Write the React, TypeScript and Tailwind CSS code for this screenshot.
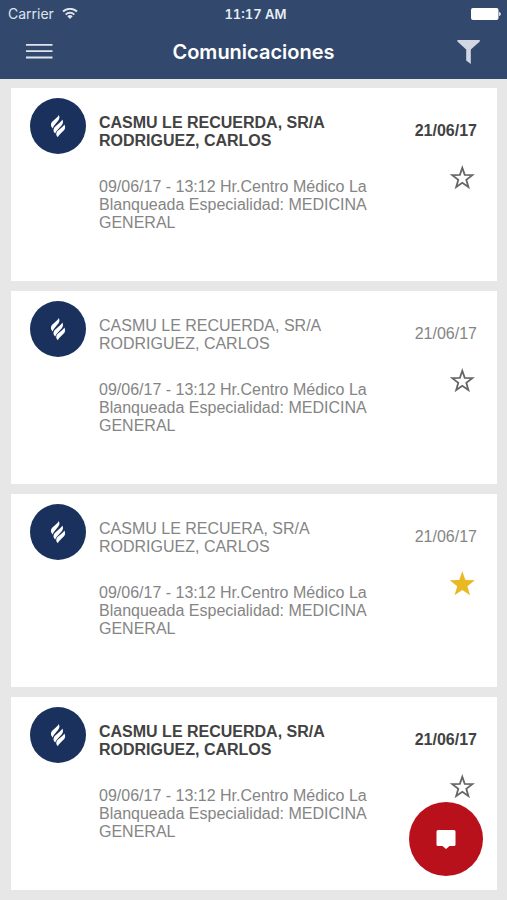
import React from 'react';

interface Comunicacion {
  id: number;
  titulo: string;
  detalle: string;
  fecha: string;
  leida: boolean;
  favorita: boolean;
}

const DETALLE = '09/06/17 - 13:12 Hr.Centro Médico La Blanqueada Especialidad: MEDICINA GENERAL';

const comunicaciones: Comunicacion[] = [
  { id: 1, titulo: 'CASMU LE RECUERDA, SR/A RODRIGUEZ, CARLOS', detalle: DETALLE, fecha: '21/06/17', leida: false, favorita: false },
  { id: 2, titulo: 'CASMU LE RECUERDA, SR/A RODRIGUEZ, CARLOS', detalle: DETALLE, fecha: '21/06/17', leida: true, favorita: false },
  { id: 3, titulo: 'CASMU LE RECUERA, SR/A RODRIGUEZ, CARLOS', detalle: DETALLE, fecha: '21/06/17', leida: true, favorita: true },
  { id: 4, titulo: 'CASMU LE RECUERDA, SR/A RODRIGUEZ, CARLOS', detalle: DETALLE, fecha: '21/06/17', leida: false, favorita: false },
];

const WifiIcon: React.FC = () => (
  <svg className="w-4 h-3" viewBox="0 0 16 12" fill="none" stroke="currentColor" strokeWidth="2">
    <path d="M1 3.600a10.200 10.200 0 0 1 14 0" />
    <path d="M3.700 6.600a6.200 6.200 0 0 1 8.600 0" />
    <path d="M8 11 5.300 8.300a3.800 3.800 0 0 1 5.400 0z" fill="currentColor" stroke="none" />
  </svg>
);

const BatteryIcon: React.FC = () => (
  <svg className="w-8 h-3" viewBox="0 0 32 12" fill="currentColor">
    <rect x="0" y="0" width="27.500" height="12" rx="2" />
    <path d="M28.200 4c2 .4 2 3.600 0 4z" />
  </svg>
);

const MenuIcon: React.FC = () => (
  <svg className="w-7 h-4" viewBox="0 0 28 16" stroke="currentColor" strokeWidth="1.8">
    <path d="M0 .9h26.500M0 7.200h26.500M0 13.500h26.500" />
  </svg>
);

const FilterIcon: React.FC = () => (
  <svg className="w-6 h-6" viewBox="0 0 24 24" fill="currentColor">
    <path d="M.4 0h22.400v1.600L13.800 9.400V24L9.200 20.500V9.400L.4 1.600z" />
  </svg>
);

const LogoIcon: React.FC = () => (
  <svg className="w-4 h-6" viewBox="0 0 16 24" fill="currentColor">
    <path d="M8.800 1C9.800 2.900 9.600 4.600 8.500 6.200L4.100 11.800C3.400 12.700 3 13.500 2.800 14.600 .7 12.900 .3 10.300 1.900 8.100L6.900 3.400C7.900 2.500 8.500 1.900 8.800 1z" />
    <path d="M12.300 5.600C13.400 7.500 13.200 9.300 12 11L7 16.500C6.100 17.500 5.500 18.300 5.300 19.500 3.200 17.800 2.900 15.400 4.500 13.200L10.100 8.200C11.200 7.200 12 6.600 12.300 5.600z" />
    <path d="M14.300 10.600C15.500 12.600 15.400 14.400 14.200 16.100L9.700 20.400C8.800 21.300 8.200 22 8 23.200 5.900 21.600 5.700 19.300 7.200 17.200L12.300 12.900C13.400 12 14 11.500 14.300 10.600z" />
  </svg>
);

const StarIcon: React.FC<{ llena: boolean }> = ({ llena }) => (
  <svg className={llena ? 'w-7 h-7 text-[#e8b923]' : 'w-7 h-7 text-[#666666]'} viewBox="0 0 28 28" fill="currentColor">
    {llena ? (
      <path d="M13.300 1.200l3.100 8.900 9.500.2-7.500 5.900 2.600 9-7.700-5.200-7.700 5.200 2.600-9L.7 10.300l9.500-.2z" />
    ) : (
      <path
        d="M13.300 3.800l2.400 7.100 7.700.2-6.100 4.700 2.100 7.200-6.100-4.200-6.100 4.200 2.100-7.200-6.100-4.700 7.700-.2z"
        fill="none"
        stroke="currentColor"
        strokeWidth="1.8"
      />
    )}
  </svg>
);

const MessageIcon: React.FC = () => (
  <svg className="w-5 h-5" viewBox="0 0 20 20" fill="currentColor">
    <path d="M2 1h16a1.500 1.500 0 0 1 1.500 1.500v13A1.500 1.500 0 0 1 18 17h-4.500L10 20l-3.500-3H2A1.500 1.500 0 0 1 .5 15.500v-13A1.500 1.500 0 0 1 2 1z" />
  </svg>
);

const ComunicacionCard: React.FC<{ comunicacion: Comunicacion }> = ({ comunicacion }) => {
  const { titulo, detalle, fecha, leida, favorita } = comunicacion;
  const estilo = leida ? 'text-[#858585]' : 'font-bold text-[#424242]';

  return (
    <li className="flex gap-[13px] bg-white pt-[10px] pb-[49px] pl-[19px] pr-5">
      <div className="flex items-center justify-center w-14 h-14 shrink-0 rounded-full bg-[#1a315d] text-white">
        <LogoIcon />
      </div>
      <div className="flex-1 pt-4">
        <h2 className={estilo}>{titulo}</h2>
        <p className="mt-7 text-[#858585]">{detalle}</p>
      </div>
      <div className="flex flex-col items-end shrink-0 pt-6">
        <time className={estilo}>{fecha}</time>
        <button type="button" aria-label="Favorita" aria-pressed={favorita} className="mt-6">
          <StarIcon llena={favorita} />
        </button>
      </div>
    </li>
  );
};

const App: React.FC = () => {
  return (
    <div className="min-h-screen bg-[#e7e7e7] font-['Liberation_Sans',Arial,sans-serif] text-base leading-[18px]">
      <header className="bg-[#32496d] pb-3 text-white font-['Inter',sans-serif]">
        <div className="grid grid-cols-3 items-center h-7 pl-2 pr-1 text-sm">
          <div className="flex items-center gap-2 text-[#dfe5ee]">
            <span>Carrier</span>
            <WifiIcon />
          </div>
          <span className="text-center text-[13px] font-semibold tabular-nums text-[#e8edf5]">11:17 AM</span>
          <span className="flex justify-end">
            <BatteryIcon />
          </span>
        </div>
        <div className="grid grid-cols-[1fr_auto_1fr] items-center h-[39px] pt-2 px-[26px]">
          <button type="button" aria-label="Menú" className="justify-self-start text-[#dfe5ee]">
            <MenuIcon />
          </button>
          <h1 className="text-xl font-semibold">Comunicaciones</h1>
          <button type="button" aria-label="Filtrar" className="justify-self-end text-[#d2d8e3]">
            <FilterIcon />
          </button>
        </div>
      </header>

      <ul className="flex flex-col gap-[10px] pt-[9px] pb-[10px] pl-[11px] pr-[10px]">
        {comunicaciones.map(comunicacion => (
          <ComunicacionCard key={comunicacion.id} comunicacion={comunicacion} />
        ))}
      </ul>

      <button
        type="button"
        aria-label="Nuevo mensaje"
        className="fixed bottom-6 right-6 flex items-center justify-center w-[74px] h-[74px] rounded-full bg-[#b8111c] text-white"
      >
        <MessageIcon />
      </button>
    </div>
  );
};

export default App;
